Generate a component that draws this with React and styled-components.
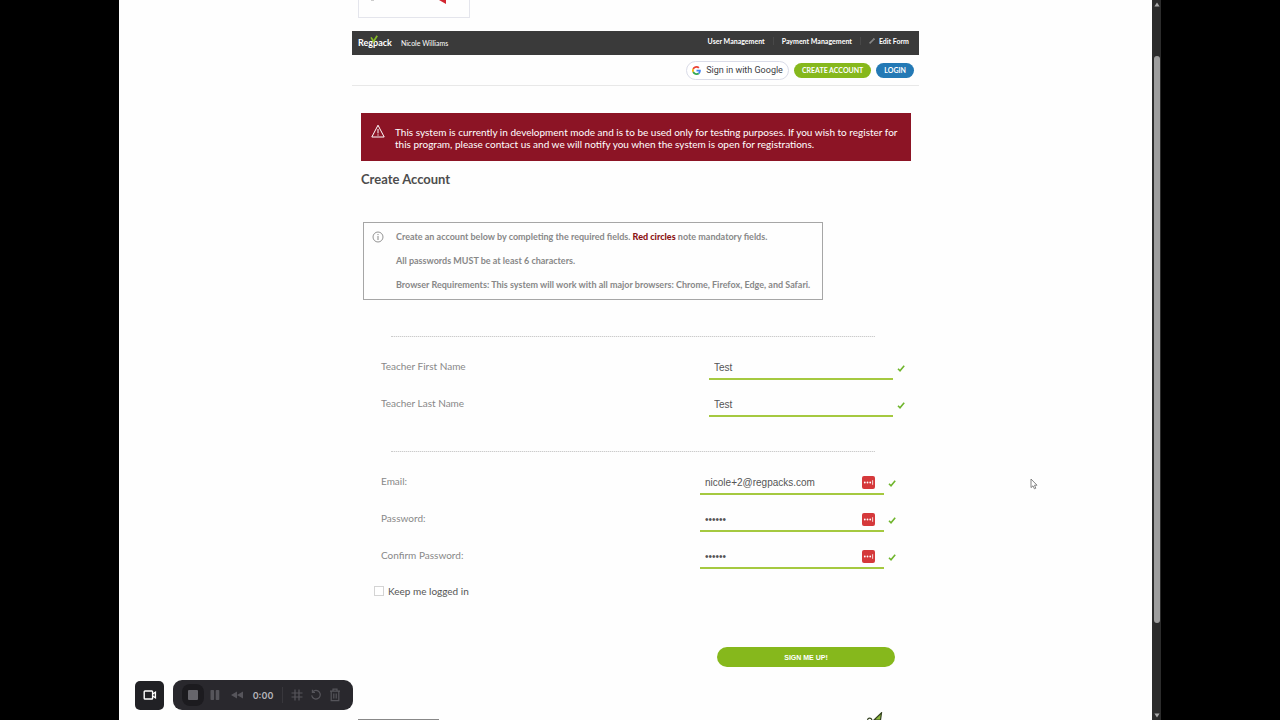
import React, { useState } from "react";
import styled, { createGlobalStyle } from "styled-components";

const GlobalStyle = createGlobalStyle`
  * {
    box-sizing: border-box;
  }

  body {
    margin: 0;
    background-color: #000;
    font-family: Lato, "Liberation Sans", sans-serif;
  }

  button,
  input {
    font-family: inherit;
    margin: 0;
    padding: 0;
    border: none;
  }

  svg {
    display: block;
  }
`;

const nameFields = [
  { id: "first", label: "Teacher First Name", type: "text", value: "Test" },
  { id: "last", label: "Teacher Last Name", type: "text", value: "Test" },
];

const accountFields = [
  { id: "email", label: "Email:", type: "text", value: "nicole+2@regpacks.com" },
  { id: "password", label: "Password:", type: "password", value: "secret" },
  { id: "confirm", label: "Confirm Password:", type: "password", value: "secret" },
];

function Check() {
  return (
    <svg width="8" height="8" viewBox="0 0 8 8" fill="none">
      <path d="M1 4.8 L3 6.8 L7.2 1.8" stroke="#6fb52c" strokeWidth="1.6" />
    </svg>
  );
}

function KeyBadge() {
  return (
    <svg width="13" height="13" viewBox="0 0 13 13">
      <rect width="13" height="13" rx="2" fill="#d5393b" />
      <circle cx="2.8" cy="6.5" r="0.9" fill="#fff" />
      <circle cx="5.5" cy="6.5" r="0.9" fill="#fff" />
      <circle cx="8.2" cy="6.5" r="0.9" fill="#fff" />
      <rect x="10.3" y="4.2" width="0.8" height="4.6" fill="#fff" />
    </svg>
  );
}

function GoogleLogo() {
  return (
    <svg width="9" height="9" viewBox="0 0 48 48">
      <path fill="#EA4335" d="M24 9.5c3.54 0 6.71 1.22 9.21 3.6l6.85-6.85C35.9 2.38 30.47 0 24 0 14.62 0 6.51 5.38 2.56 13.22l7.98 6.19C12.43 13.72 17.74 9.5 24 9.5z" />
      <path fill="#4285F4" d="M46.98 24.55c0-1.57-.15-3.09-.38-4.55H24v9.02h12.94c-.58 2.96-2.26 5.48-4.78 7.18l7.73 6c4.51-4.18 7.09-10.36 7.09-17.65z" />
      <path fill="#FBBC05" d="M10.53 28.59c-.48-1.45-.76-2.99-.76-4.59s.27-3.14.76-4.59l-7.98-6.19C.92 16.46 0 20.12 0 24c0 3.88.92 7.54 2.56 10.78l7.97-6.19z" />
      <path fill="#34A853" d="M24 48c6.48 0 11.93-2.13 15.89-5.81l-7.73-6c-2.15 1.45-4.92 2.3-8.16 2.3-6.26 0-11.57-4.22-13.47-9.91l-7.98 6.19C6.51 42.62 14.62 48 24 48z" />
    </svg>
  );
}

function Field({ field, badge }) {
  const [value, setValue] = useState(field.value);
  return (
    <Row>
      <Label htmlFor={field.id}>{field.label}</Label>
      <InputBox>
        <Input
          id={field.id}
          type={field.type}
          value={value}
          autoComplete="off"
          onChange={(e) => setValue(e.target.value)}
        />
        {badge && <KeyBadge />}
      </InputBox>
      <Check />
    </Row>
  );
}

function Recorder() {
  return (
    <RecorderBar>
      <CameraButton aria-label="Camera">
        <svg width="14" height="12" viewBox="0 0 14 12" fill="none" stroke="#fff" strokeWidth="1.4">
          <rect x="1.2" y="2" width="8.4" height="8" rx="0.8" />
          <path d="M9.6 5 L12.4 3.2 V8.8 L9.6 7" />
        </svg>
      </CameraButton>
      <Controls>
        <Control $active aria-label="Stop">
          <svg width="12" height="12" viewBox="0 0 12 12">
            <rect x="1" y="1" width="10" height="10" rx="1" fill="#67666c" />
          </svg>
        </Control>
        <Control aria-label="Pause">
          <svg width="10" height="12" viewBox="0 0 10 12" fill="#56555b">
            <rect x="0.5" y="1" width="3.6" height="10" rx="0.8" />
            <rect x="5.7" y="1" width="3.6" height="10" rx="0.8" />
          </svg>
        </Control>
        <Control aria-label="Rewind">
          <svg width="14" height="12" viewBox="0 0 14 12" fill="#56555b">
            <path d="M7 2.4 V9.6 L1 6 Z M13 2.4 V9.6 L7 6 Z" />
          </svg>
        </Control>
        <Time>0:00</Time>
        <Separator />
        <Control $small aria-label="Effects">
          <svg width="12" height="12" viewBox="0 0 12 12" stroke="#56555b" strokeWidth="1.2">
            <path d="M4 0.5 V11.5 M8 0.5 V11.5" />
            <path d="M0.5 4 H11.5 M0.5 8 H11.5" />
          </svg>
        </Control>
        <Control $small aria-label="Restart">
          <svg width="12" height="12" viewBox="0 0 12 12" fill="none" stroke="#56555b" strokeWidth="1.2">
            <path d="M2.6 3 A4.3 4.3 0 1 1 1.7 6.4" />
            <path d="M2.4 0.8 V3.4 H5" />
          </svg>
        </Control>
        <Control $small aria-label="Delete">
          <svg width="12" height="14" viewBox="0 0 12 14" fill="none" stroke="#56555b" strokeWidth="1.2">
            <path d="M1 3.2 H11 M4 3 V1.2 H8 V3 M2.2 3.4 V12.6 H9.8 V3.4 M4.8 5.4 V10.6 M7.2 5.4 V10.6" />
          </svg>
        </Control>
      </Controls>
    </RecorderBar>
  );
}

function App() {
  const [keep, setKeep] = useState(false);
  return (
    <Screen>
      <GlobalStyle />
      <Page>
        <Content>
          <SchoolLogo>
            <svg width="110" height="17" viewBox="0 0 110 17">
              <path d="M80 0 H87 V4 Z" fill="#d22630" />
              <path d="M12 0 H15" stroke="#999" strokeWidth="1" />
            </svg>
          </SchoolLogo>

          <NavBar>
            <Brand href="#">
              Regpack
              <svg width="8" height="8" viewBox="0 0 8 8" fill="none">
                <path d="M1 2.4 L3.6 6.4 L7.2 0.8" stroke="#86bc25" strokeWidth="1.7" />
              </svg>
            </Brand>
            <User>Nicole Williams</User>
            <NavLinks>
              <NavLink href="#">User Management</NavLink>
              <NavLink href="#">Payment Management</NavLink>
              <NavLink href="#">
                <svg width="6" height="6" viewBox="0 0 6 6" fill="none">
                  <path d="M0.6 5.4 L4.4 1.6" stroke="#888" strokeWidth="1.5" />
                  <path d="M4.5 1.5 L5.4 0.6" stroke="#aaa" strokeWidth="1.5" />
                </svg>
                Edit Form
              </NavLink>
            </NavLinks>
          </NavBar>

          <Actions>
            <GoogleButton>
              <GoogleLogo />
              Sign in with Google
            </GoogleButton>
            <Pill>CREATE ACCOUNT</Pill>
            <Pill $blue>LOGIN</Pill>
          </Actions>

          <Alert>
            <svg width="14" height="14" viewBox="0 0 14 14" fill="none" stroke="#fff">
              <path d="M7 1.2 L13.2 13 H0.8 Z" strokeWidth="1" />
              <path d="M7 5 V9.4 M7 10.4 V11.6" strokeWidth="1" />
            </svg>
            <p>
              This system is currently in development mode and is to be used only for
              testing purposes. If you wish to register for this program, please contact us
              and we will notify you when the system is open for registrations.
            </p>
          </Alert>

          <Title>Create Account</Title>

          <Info>
            <svg width="12" height="12" viewBox="0 0 12 12" fill="none" stroke="#888">
              <circle cx="6" cy="6" r="5" strokeWidth="0.9" />
              <path d="M6 5 V9 M6 3 V4.1" strokeWidth="1" />
            </svg>
            <div>
              <p>
                Create an account below by completing the required fields.{" "}
                <strong>Red circles</strong> note mandatory fields.
              </p>
              <p>All passwords MUST be at least 6 characters.</p>
              <p>
                Browser Requirements: This system will work with all major browsers: Chrome,
                Firefox, Edge, and Safari.
              </p>
            </div>
          </Info>

          <Form onSubmit={(e) => e.preventDefault()}>
            <Divider />
            <Fields>
              {nameFields.map((field) => (
                <Field key={field.id} field={field} />
              ))}
            </Fields>
            <Divider />
            <Fields $inset>
              {accountFields.map((field) => (
                <Field key={field.id} field={field} badge />
              ))}
            </Fields>
            <Keep>
              <input
                type="checkbox"
                checked={keep}
                onChange={(e) => setKeep(e.target.checked)}
              />
              Keep me logged in
            </Keep>
            <Submit type="submit">SIGN ME UP!</Submit>
          </Form>

          <Footer>
            <FooterLine />
            <svg width="18" height="8" viewBox="0 0 18 8" fill="none">
              <path d="M8 8 L15.5 0.8 L14.5 8 Z" fill="#8cb83c" stroke="#33401f" strokeWidth="1.2" />
              <path d="M1.5 8 C2 5.6 5 5.4 6 8" stroke="#33401f" strokeWidth="1.2" />
            </svg>
          </Footer>
        </Content>
      </Page>

      <ScrollBar>
        <svg width="6" height="5" viewBox="0 0 6 5">
          <path d="M3 0.5 L5.6 4.5 H0.4 Z" fill="#aaa" />
        </svg>
        <Thumb />
        <svg width="6" height="5" viewBox="0 0 6 5">
          <path d="M3 4.5 L5.6 0.5 H0.4 Z" fill="#aaa" />
        </svg>
      </ScrollBar>

      <Recorder />

      <Pointer width="8" height="12" viewBox="0 0 8 12">
        <path
          d="M1 1 V9.6 L3 7.8 L4.4 10.8 L5.8 10.2 L4.5 7.2 H7 Z"
          fill="#fff"
          stroke="#777"
          strokeWidth="0.9"
        />
      </Pointer>
    </Screen>
  );
}

const Screen = styled.div`
  position: relative;
  display: flex;
  min-height: 100vh;
  margin: 0 119px;
`;

const Page = styled.div`
  flex: 1;
  display: flex;
  justify-content: center;
  background-color: #fefefe;
`;

const Content = styled.main`
  display: flex;
  flex-direction: column;
  width: 100%;
  max-width: 567px;
`;

const SchoolLogo = styled.div`
  width: 112px;
  height: 18px;
  margin: 0 6px 13px;
  border: 1px solid #e4e5ec;
  border-top: none;
`;

const NavBar = styled.nav`
  display: flex;
  align-items: center;
  height: 24px;
  padding: 0 10px 0 6px;
  background-color: #3a3a3a;
  color: #fff;
`;

const Brand = styled.a`
  position: relative;
  font-size: 9px;
  font-weight: 700;
  line-height: 12px;
  color: #fff;
  text-decoration: none;

  svg {
    position: absolute;
    top: -2px;
    left: 12px;
  }
`;

const User = styled.span`
  margin-left: 9px;
  font-size: 7px;
`;

const NavLinks = styled.div`
  display: flex;
  margin-left: auto;
  padding-bottom: 4px;
`;

const NavLink = styled.a`
  display: flex;
  align-items: center;
  gap: 4px;
  padding-left: 8px;
  margin-left: 8px;
  border-left: 1px solid #484848;
  font-size: 7px;
  font-weight: 700;
  line-height: 8px;
  color: #fff;
  text-decoration: none;

  &:first-child {
    border-left: none;
  }
`;

const Actions = styled.div`
  display: flex;
  align-items: center;
  justify-content: flex-end;
  gap: 5px;
  height: 31px;
  padding-right: 5px;
  border-bottom: 1px solid #e8e8e8;
`;

const GoogleButton = styled.button`
  display: flex;
  align-items: center;
  gap: 5px;
  height: 19px;
  padding: 0 5px;
  border: 1px solid #dadce8;
  border-radius: 10px;
  background-color: #fff;
  color: #3c4043;
  font-family: Roboto, sans-serif;
  font-size: 9px;
  cursor: pointer;
`;

const Pill = styled.button`
  height: 15px;
  padding: 0 8px;
  border-radius: 8px;
  background-color: ${(props) => (props.$blue ? "#2379b5" : "#86b81c")};
  color: #fff;
  font-size: 7px;
  font-weight: 700;
  cursor: pointer;
`;

const Alert = styled.div`
  display: flex;
  gap: 10px;
  margin: 27px 8px 0 9px;
  padding: 13px 5px 11px 10px;
  background-color: #8c1425;
  color: #fff;

  svg {
    flex-shrink: 0;
    margin-top: -2px;
  }

  p {
    margin: 0;
    font-size: 10px;
    line-height: 12px;
  }
`;

const Title = styled.h1`
  margin: 9px 9px 0;
  font-size: 13px;
  font-weight: 700;
  line-height: 18px;
  color: #4d4d4d;
`;

const Info = styled.section`
  display: flex;
  gap: 12px;
  width: 460px;
  margin: 34px 11px 0;
  padding: 8px;
  border: 1px solid #a6a6a6;
  color: #888;

  p {
    margin: 0 0 12px;
    font-size: 9px;
    font-weight: 700;
    line-height: 12px;
  }

  p:last-child {
    margin-bottom: 0;
  }

  strong {
    color: #8c1414;
  }
`;

const Form = styled.form`
  display: flex;
  flex-direction: column;
  padding-top: 16px;
`;

const Divider = styled.hr`
  width: 484px;
  height: 1px;
  margin: 20px 39px 19px;
  border: none;
  border-top: 1px dotted #ccc;
  background-color: #eee;
`;

const Fields = styled.div`
  padding: 0 ${(props) => (props.$inset ? "23px" : "14px")} 1px 29px;
`;

const Row = styled.div`
  display: flex;
  align-items: center;
  gap: 4px;
  height: 24px;
  margin-bottom: 13px;
`;

const Label = styled.label`
  flex: 1;
  padding-bottom: 5px;
  font-size: 10px;
  line-height: 16px;
  color: #888;
`;

const InputBox = styled.div`
  display: flex;
  align-items: center;
  width: 184px;
  height: 24px;
  padding: 0 9px 0 5px;
  border-bottom: 2px solid #a5c940;
`;

const Input = styled.input`
  flex: 1;
  min-width: 0;
  height: 20px;
  background: transparent;
  color: #555;
  font-family: "Liberation Sans", Arial, sans-serif;
  font-size: 10px;
  outline: none;
`;

const Keep = styled.label`
  display: flex;
  align-items: center;
  gap: 4px;
  height: 16px;
  margin-left: 22px;
  font-size: 10px;
  color: #555;

  input {
    appearance: none;
    width: 10px;
    height: 10px;
    border: 1px solid #d4d4d4;
    background-color: #fff;
  }

  input:checked {
    background-color: #86b81c;
  }
`;

const Submit = styled.button`
  align-self: flex-end;
  width: 178px;
  height: 20px;
  margin: 48px 24px 0;
  border-radius: 10px;
  background-color: #86b81c;
  color: #fff;
  font-family: "Liberation Sans", Arial, sans-serif;
  font-size: 7px;
  font-weight: 700;
  cursor: pointer;
`;

const Footer = styled.footer`
  display: flex;
  justify-content: space-between;
  align-items: flex-end;
  margin-top: auto;
  padding: 0 35px 0 6px;
`;

const FooterLine = styled.div`
  width: 81px;
  height: 1px;
  background-color: #888;
`;

const ScrollBar = styled.div`
  display: flex;
  flex-direction: column;
  align-items: center;
  width: 9px;
  padding: 2px 0;
  background-color: #2c2c2c;
`;

const Thumb = styled.div`
  flex: 1;
  width: 6px;
  margin: 49px 0 90px;
  border-radius: 3px;
  background-color: #9e9e9e;
`;

const RecorderBar = styled.div`
  position: absolute;
  left: 16px;
  bottom: 10px;
  display: flex;
  align-items: center;
  gap: 9px;
`;

const CameraButton = styled.button`
  display: flex;
  align-items: center;
  justify-content: center;
  width: 29px;
  height: 29px;
  border-radius: 5px;
  background-color: #212125;
  cursor: pointer;
`;

const Controls = styled.div`
  display: flex;
  align-items: center;
  height: 30px;
  padding: 0 9px;
  border-radius: 9px;
  background-color: #29282d;
`;

const Control = styled.button`
  display: flex;
  align-items: center;
  justify-content: center;
  width: ${(props) => (props.$small ? "19px" : "22px")};
  height: 22px;
  border-radius: 8px;
  background-color: ${(props) => (props.$active ? "#1c1b1f" : "transparent")};
  cursor: pointer;
`;

const Time = styled.span`
  width: 30px;
  font-family: Inter, sans-serif;
  font-size: 9px;
  font-weight: 600;
  text-align: center;
  color: #b4b3b8;
`;

const Separator = styled.span`
  width: 1px;
  height: 16px;
  margin: 0 4px;
  background-color: #38373c;
`;

const Pointer = styled.svg`
  position: absolute;
  top: 478px;
  left: 911px;
`;

export default App;
